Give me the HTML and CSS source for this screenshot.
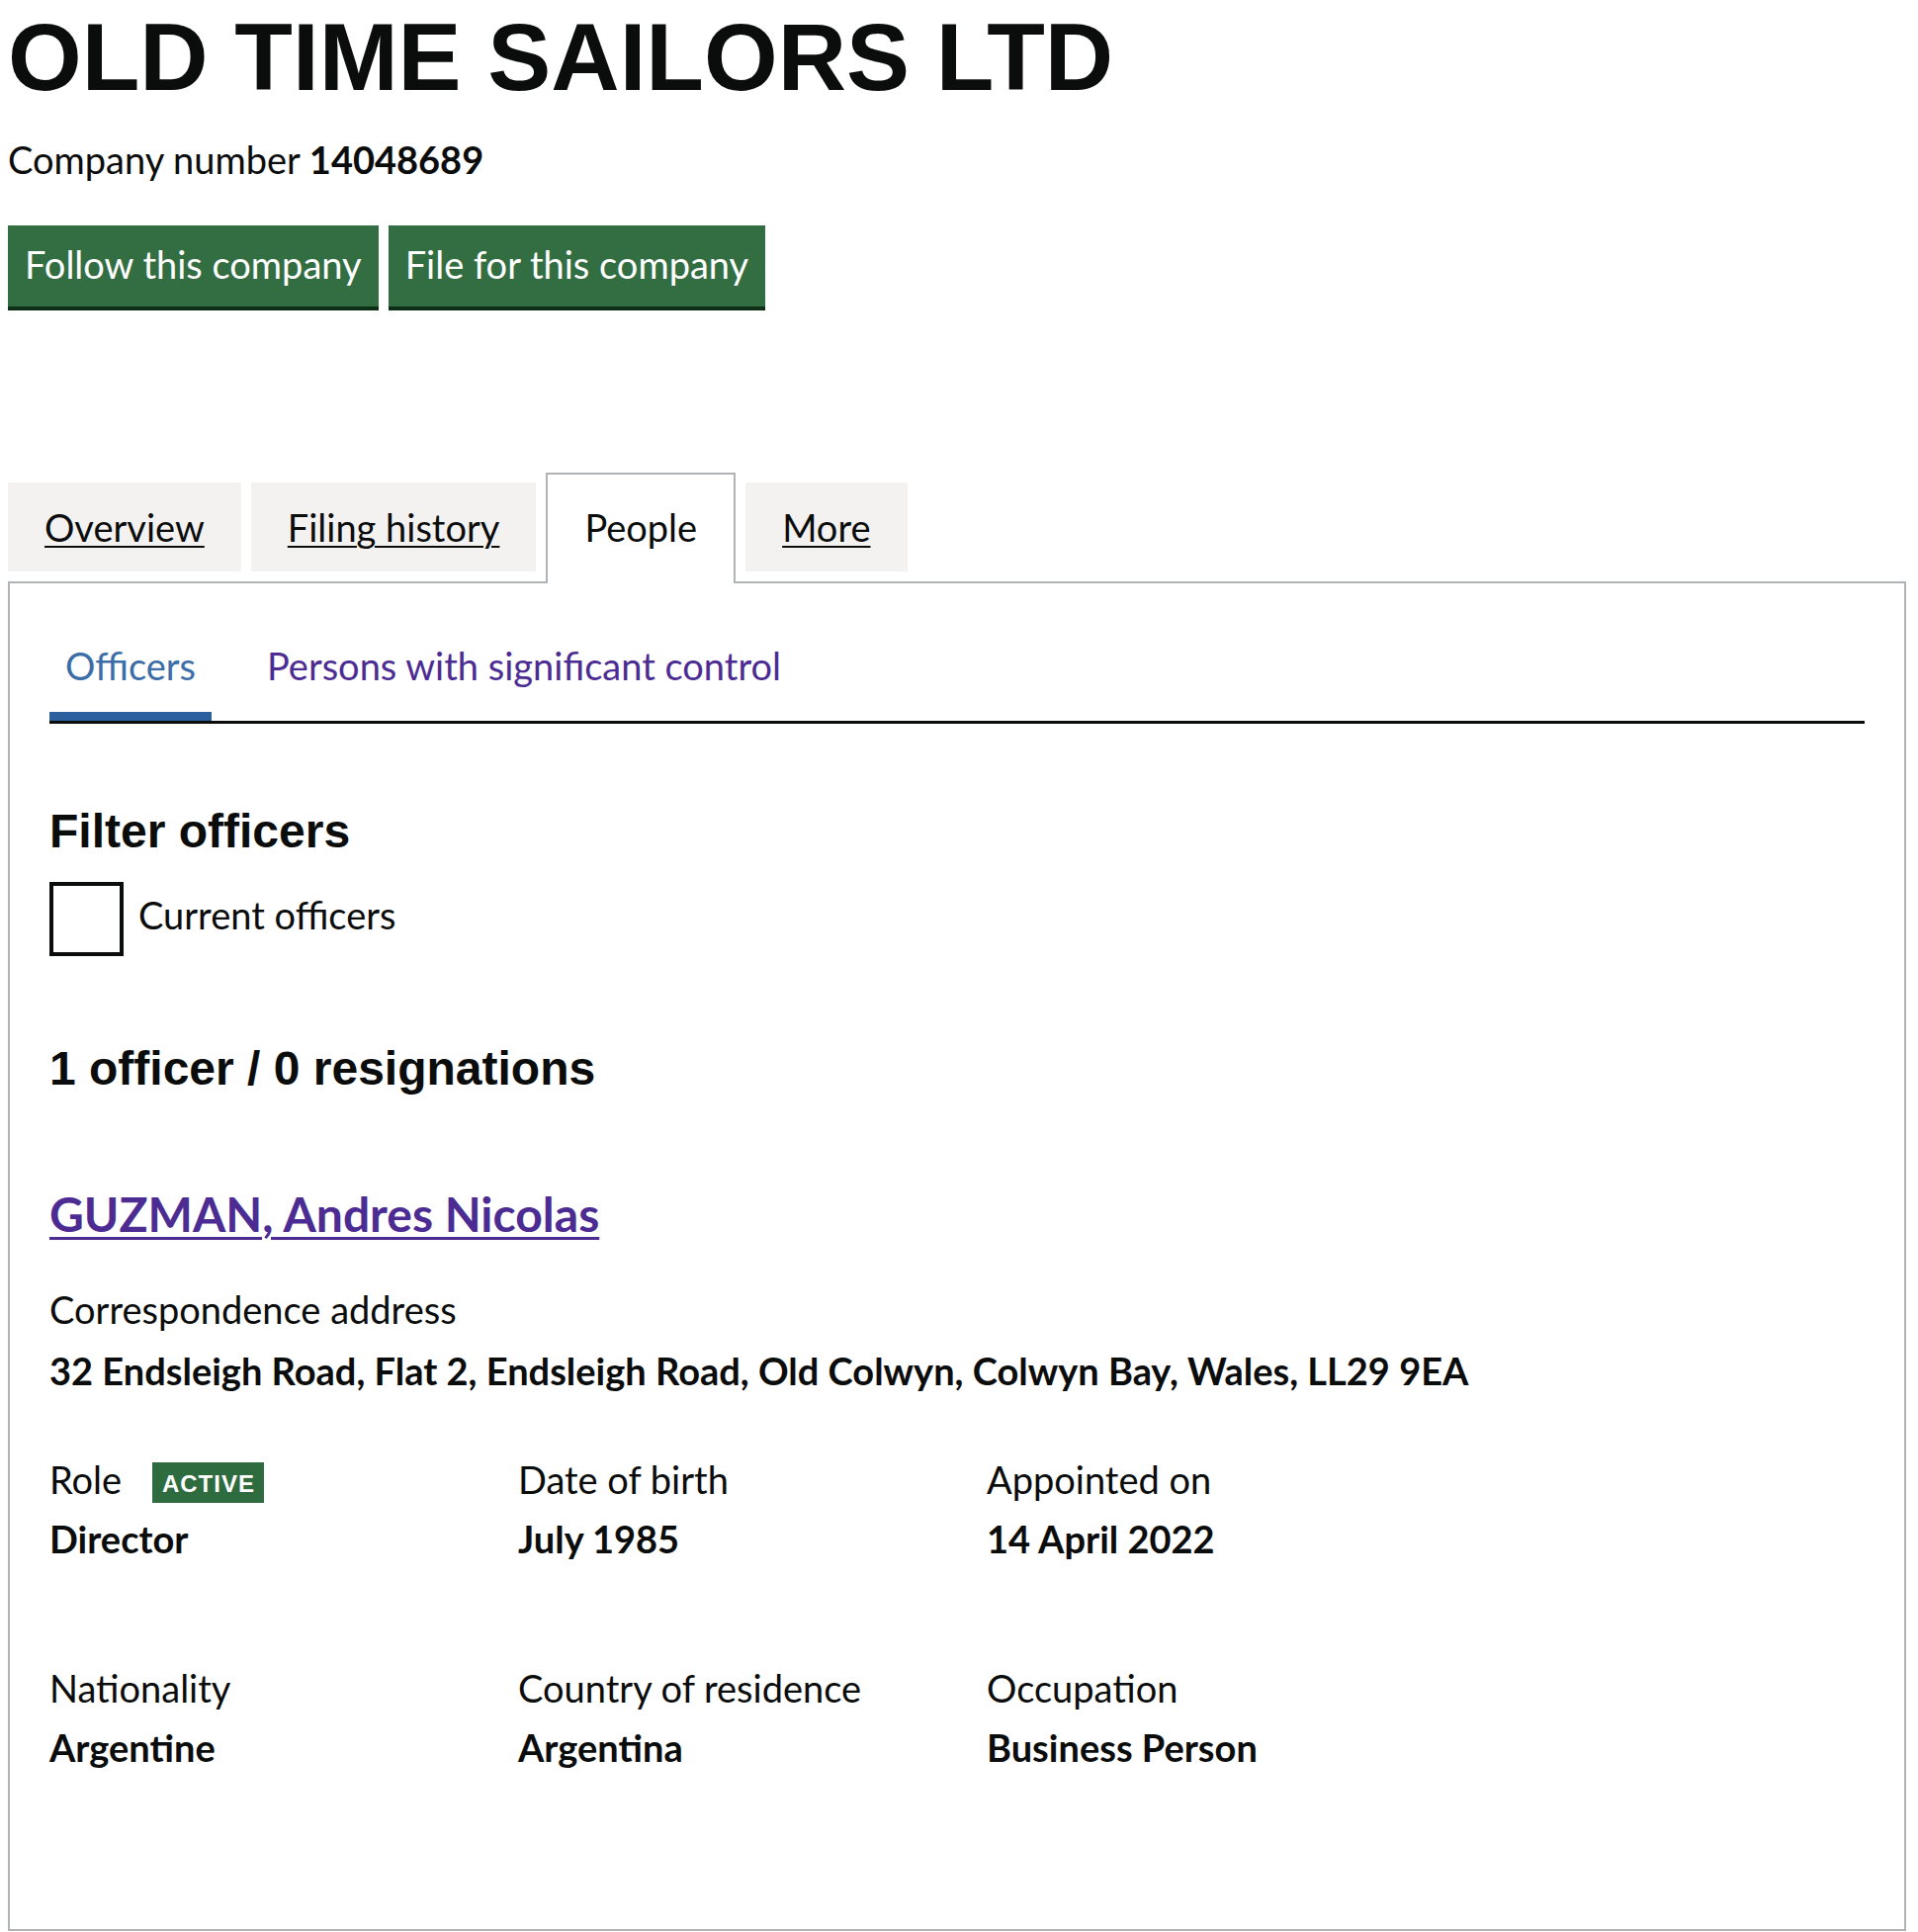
FILE: index.html
```html
<!DOCTYPE html>
<html lang="en">
<head>
<meta charset="utf-8">
<title>OLD TIME SAILORS LTD - People</title>
<link rel="stylesheet" href="styles.css">
</head>
<body>
<main class="page">
  <h1 class="company-name">OLD TIME SAILORS LTD</h1>
  <p class="company-number">Company number <strong>14048689</strong></p>
  <div class="actions">
    <a class="button" href="#">Follow this company</a>
    <a class="button" href="#">File for this company</a>
  </div>

  <ul class="tabs">
    <li class="tab"><a href="#">Overview</a></li>
    <li class="tab"><a href="#">Filing history</a></li>
    <li class="tab tab-selected"><span>People</span></li>
    <li class="tab"><a href="#">More</a></li>
  </ul>

  <section class="panel">
    <ul class="subnav">
      <li class="subnav-item subnav-current"><a href="#">Officers</a></li>
      <li class="subnav-item"><a href="#">Persons with significant control</a></li>
    </ul>

    <h2 class="heading filter-heading">Filter officers</h2>
    <label class="checkbox">
      <span class="checkbox-box"></span>
      <span class="checkbox-label">Current officers</span>
    </label>

    <h2 class="heading count-heading">1 officer / 0 resignations</h2>

    <div class="officer">
      <h3 class="officer-name"><a href="#">GUZMAN, Andres Nicolas</a></h3>
      <dl class="address">
        <dt>Correspondence address</dt>
        <dd>32 Endsleigh Road, Flat 2, Endsleigh Road, Old Colwyn, Colwyn Bay, Wales, LL29 9EA</dd>
      </dl>

      <div class="details first-row">
        <dl><dt>Role <span class="tag">Active</span></dt><dd>Director</dd></dl>
        <dl><dt>Date of birth</dt><dd>July 1985</dd></dl>
        <dl><dt>Appointed on</dt><dd>14 April 2022</dd></dl>
      </div>
      <div class="details second-row">
        <dl><dt>Nationality</dt><dd>Argentine</dd></dl>
        <dl><dt>Country of residence</dt><dd>Argentina</dd></dl>
        <dl><dt>Occupation</dt><dd>Business Person</dd></dl>
      </div>
    </div>
  </section>
</main>
</body>
</html>
```

FILE: styles.css
```css
* { box-sizing: border-box; }

html, body { background: #ffffff; }

body {
  margin: 8px;
  font-family: Lato, "Noto Sans", sans-serif;
  font-size: 38px;
  line-height: 50px;
  color: #0b0c0c;
}

.page { width: 1920px; }

.company-name {
  font-family: "Liberation Sans", Arial, sans-serif;
  font-weight: 700;
  font-size: 96px;
  line-height: 100px;
  margin: 0 0 28px;
}

.company-number { margin: 0; }
.company-number strong { font-weight: 700; }

.actions {
  display: flex;
  gap: 10px;
  margin-top: 42px;
}

.button {
  display: block;
  background: #336e43;
  color: #ffffff;
  text-decoration: none;
  font-size: 38px;
  line-height: 45px;
  padding: 17px 17px 20px;
  box-shadow: 0 4px 0 #0d2f16;
}

.tabs {
  list-style: none;
  margin: 168px 0 0;
  padding: 0;
  display: flex;
  align-items: flex-start;
}

.tab {
  margin: 10px 10px 0 0;
  padding: 20px 37px;
  background: #f3f2f1;
}

.tab a {
  color: #0b0c0c;
  text-decoration: underline;
  text-decoration-thickness: 2px;
  text-underline-offset: 4px;
}

.tab-selected {
  position: relative;
  margin-top: 0;
  margin-bottom: -2px;
  padding: 28px 37px 32px;
  background: #ffffff;
  border: 2px solid #b1b4b6;
  border-bottom: 0;
}

.panel {
  border: 2px solid #b1b4b6;
  padding: 60px 40px;
}

.subnav {
  list-style: none;
  margin: -2px 0 0;
  padding: 0;
  display: flex;
  border-bottom: 3px solid #0b0c0c;
}

.subnav-item {
  padding: 0 16px 22px;
  margin-right: 40px;
  border-bottom: 9px solid transparent;
}

.subnav-item a {
  color: #4c2c92;
  text-decoration: none;
}

.subnav-current { border-bottom-color: #2b5f9e; }
.subnav-current a { color: #3b6ea7; }

.heading {
  font-family: "Liberation Sans", Arial, sans-serif;
  font-weight: 700;
  font-size: 48px;
  line-height: 60px;
  margin: 0;
}

.filter-heading { margin-top: 79px; }
.count-heading { margin-top: 84px; }

.checkbox {
  display: flex;
  align-items: flex-start;
  margin-top: 21px;
}

.checkbox-box {
  flex: none;
  width: 75px;
  height: 75px;
  border: 4px solid #0b0c0c;
  background: #ffffff;
}

.checkbox-label { margin: 8px 0 0 15px; }

.officer-name {
  margin: 87px 0 0;
  font-size: 48px;
  line-height: 60px;
  font-weight: 700;
}

.officer-name a {
  color: #4c2c92;
  text-decoration: underline;
  text-decoration-thickness: 3px;
  text-underline-offset: 5px;
}

dl { margin: 0; }
dt { font-weight: 400; }
dd { margin: 0; font-weight: 700; }

.address { margin-top: 41px; }
.address dd { margin-top: 12px; }

.details {
  display: grid;
  grid-template-columns: repeat(4, 1fr);
  column-gap: 60px;
}

.details dd { margin-top: 10px; }

.first-row { margin-top: 60px; }
.second-row { margin-top: 101px; margin-bottom: 99px; }

.tag {
  display: inline-block;
  margin-left: 21px;
  padding: 10px 9px 7px 10px;
  font-family: "Liberation Sans", Arial, sans-serif;
  font-weight: 700;
  font-size: 24px;
  line-height: 24px;
  letter-spacing: 1px;
  text-transform: uppercase;
  color: #ffffff;
  background: #2e6b3e;
  vertical-align: 2px;
}
```
